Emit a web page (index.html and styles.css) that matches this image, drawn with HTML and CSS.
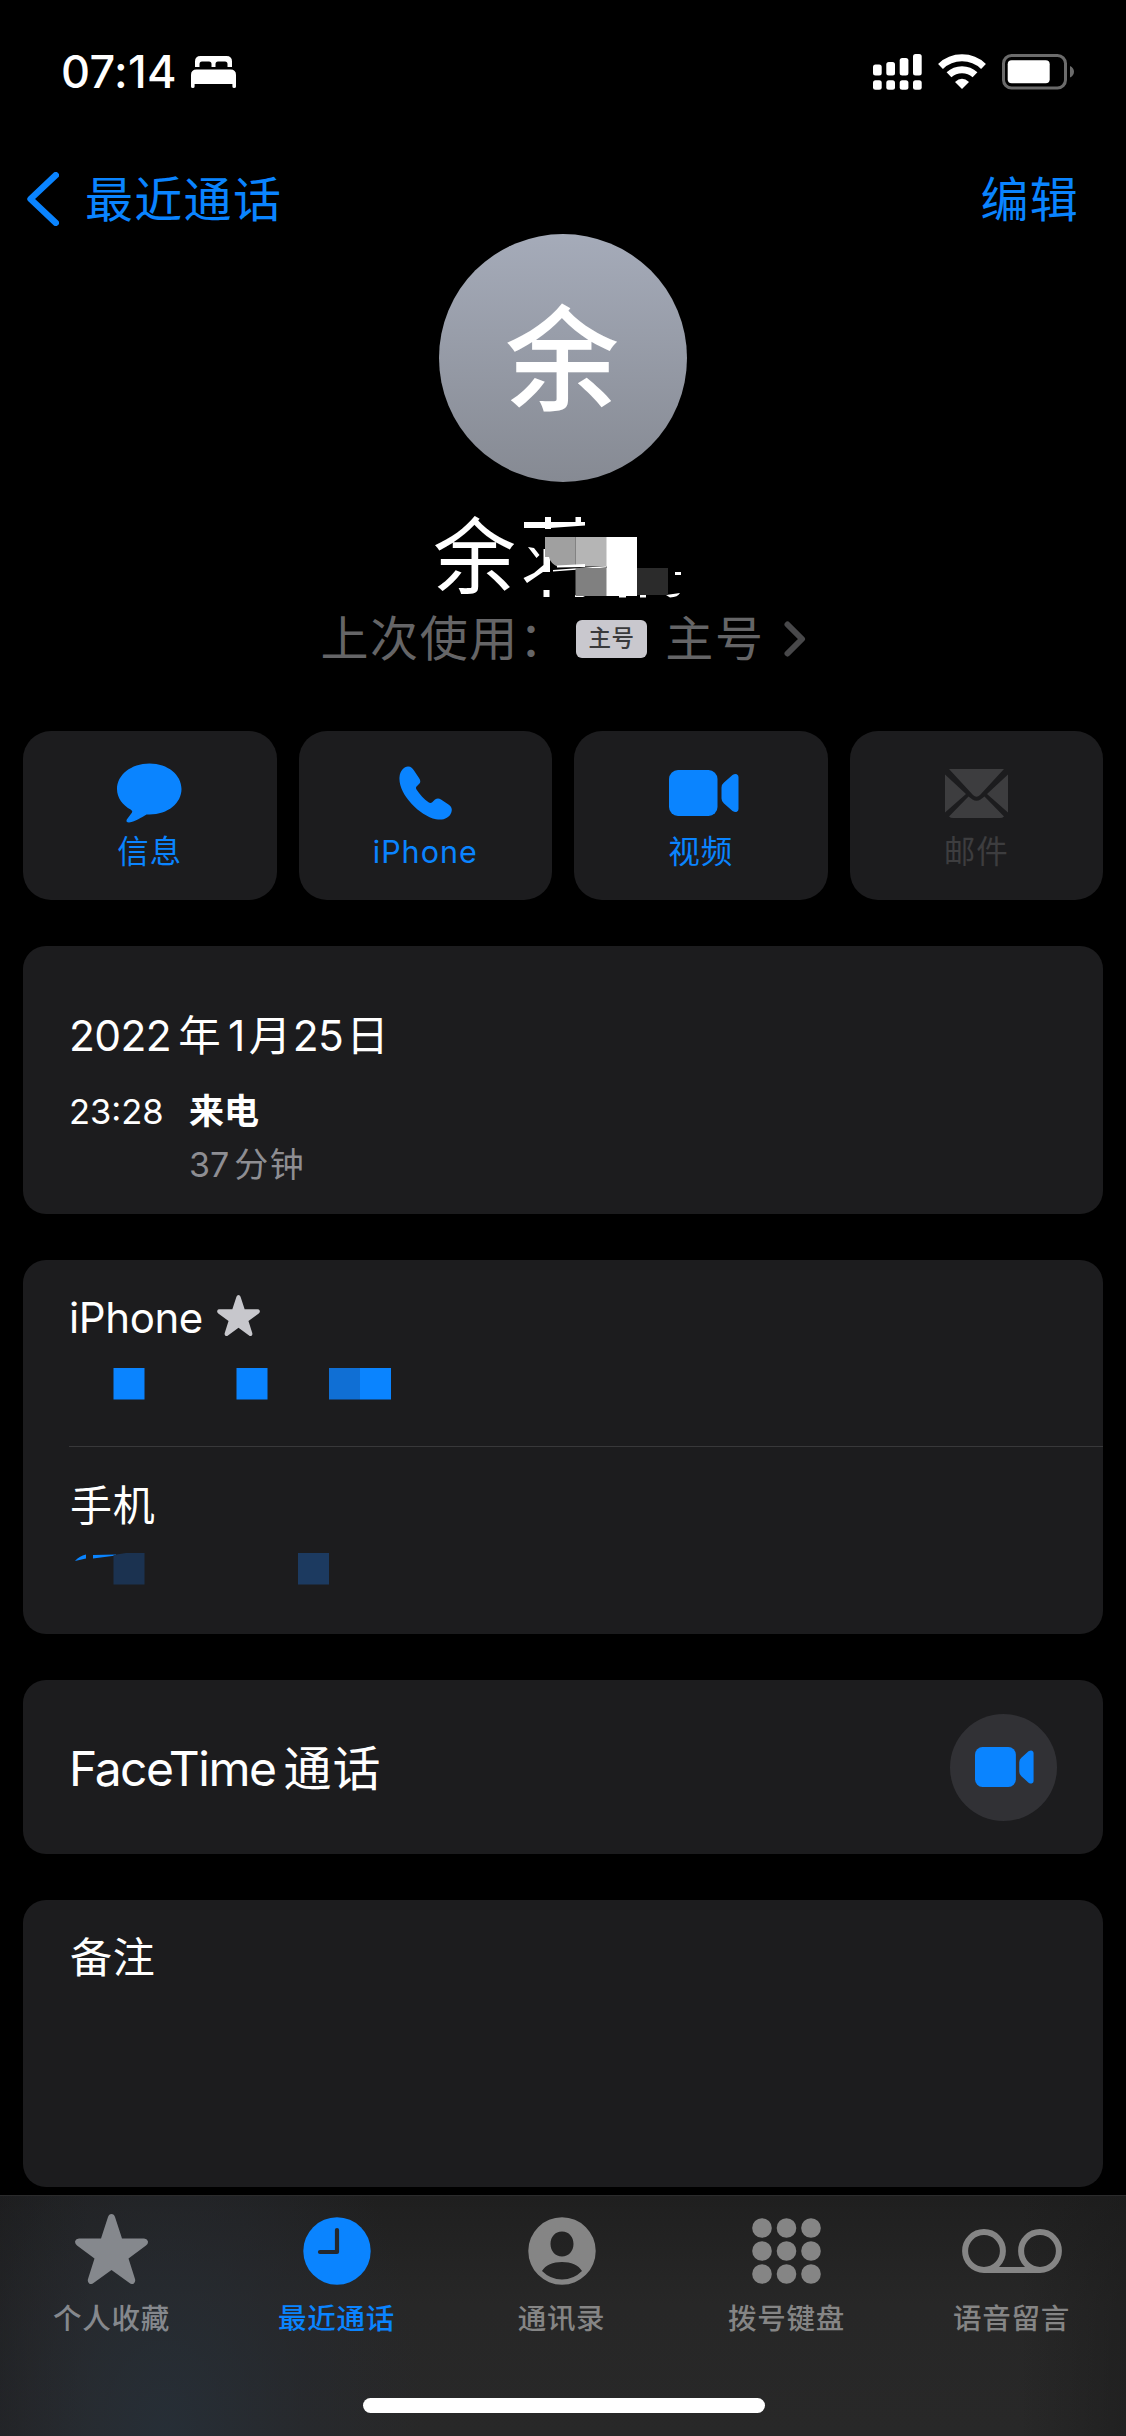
FILE: index.html
```html
<!DOCTYPE html>
<html lang="zh-CN">
<head>
<meta charset="utf-8">
<title>最近通话</title>
<link rel="stylesheet" href="styles.css">
</head>
<body>
<div class="screen">
  <header class="status">
    <div class="status-left">
      <span class="time">07:14</span>
      <svg width="45" height="32" viewBox="0 0 45 32" fill="#fff"><path d="M4 11V5.500Q4 0 9.500 0H35.500Q41 0 41 5.500V11H36.500V8Q36.500 5.500 34 5.500H27Q24.500 5.500 24.500 8V11H20.500V8Q20.500 5.500 18 5.500H11Q8.500 5.500 8.500 8V11ZM0 19Q0 13.500 5.500 13.500H39.500Q45 13.500 45 19V30.500Q45 32 43.200 32Q41.400 32 41.400 30.500V28H3.600V30.500Q3.600 32 1.800 32Q0 32 0 30.500Z"/></svg>
    </div>
    <div class="status-right">
      <svg width="49" height="36" viewBox="0 0 49 36" fill="#fff"><rect x="0" y="10.500" width="8.700" height="11" rx="2.500"/><rect x="13.300" y="8" width="8.700" height="13.500" rx="2.500"/><rect x="26.700" y="4" width="8.700" height="17.500" rx="2.500"/><rect x="40" y="0" width="8.700" height="21.500" rx="2.500"/><rect x="0" y="26.300" width="8.700" height="9.400" rx="2.500"/><rect x="13.300" y="26.300" width="8.700" height="9.400" rx="2.500"/><rect x="26.700" y="26.300" width="8.700" height="9.400" rx="2.500"/><rect x="40" y="26.300" width="8.700" height="9.400" rx="2.500"/></svg>
      <svg class="wifi" width="48" height="36" viewBox="0 0 48 36"><g fill="none" stroke="#fff" stroke-width="7"><path d="M2.500 12.500A31 31 0 0 1 45.500 12.500"/><path d="M11 20.800A19 19 0 0 1 37 20.800"/></g><path d="M24 35L17 28Q24 21.500 31 28Z" fill="#fff"/></svg>
      <svg width="72" height="36" viewBox="0 0 72 36"><rect x="1.500" y="1.500" width="62" height="32.500" rx="8" fill="none" stroke="#6b6b6b" stroke-width="3"/><rect x="5.700" y="6.300" width="42" height="23" rx="4" fill="#fff"/><path d="M68 12Q72 14 72 17.700T68 23.500Z" fill="#6b6b6b"/></svg>
    </div>
  </header>

  <nav class="nav">
    <a class="back"><svg width="32" height="54" viewBox="0 0 32 54"><path d="M28.800 3.200L3.500 27L28.800 50.800" fill="none" stroke="#0a84ff" stroke-width="6.400" stroke-linecap="round" stroke-linejoin="round"/></svg><span>最近通话</span></a>
    <a class="edit">编辑</a>
  </nav>

  <section class="profile">
    <div class="avatar">余</div>
    <div class="name">
      <span>余</span>
      <svg width="170" height="82" viewBox="522 516 170 82" fill="#fff">
        <path d="M524 522H585V525.500L550 528H524ZM545 517H551V529H545ZM575.500 517H581V526H575.500ZM528 547L534 548L539.500 555L536.500 558ZM543.500 549H550V572H543V572L527 583L523.500 578L534 573L543.500 565ZM543.500 590H549.500V597H543.500ZM553 570L606 566V567.500L553 571.500ZM575 595H587L583 597H575ZM619 595H626V597.500H619ZM640 595H646V597.500H640ZM675 572H681V575H675ZM666 595L680 593Q678 597 670 597.500Z"/>
        <path d="M545 537H575.500V567H558Q550 563 549 557H545Z" fill="#a0a0a0"/>
        <path d="M575.500 537H607V566.500H575.500Z" fill="#b5b5b5"/>
        <path d="M557 565.500L585 564V567L557 567.500Z"/>
        <path d="M575.500 568H607V596H575.500Z" fill="#808080"/>
        <path d="M606.500 537H637V596H606.500Z"/>
        <path d="M637 568H668V595H637Z" fill="#2b2b2b"/>
      </svg>
    </div>
    <div class="last-used"><span>上次使用：</span><span class="sim">主号</span><span>主号</span><svg width="22" height="36" viewBox="0 0 22 36"><path d="M3.500 3.500L18 18L3.500 32.500" fill="none" stroke="#48484a" stroke-width="6" stroke-linecap="round" stroke-linejoin="round"/></svg></div>
  </section>

  <section class="actions">
    <div class="action"><svg width="65" height="60" viewBox="0 0 65 60"><path fill="currentColor" d="M32.500 .5C51 .5 64.500 12 64.500 26S51 51.500 32.500 51.500H29.500C24 54.500 19 58.500 12 59.500Q8.500 59.500 9.800 56.500L15 49.500Q16 48.200 14 46.800C5.500 42 0 35 0 26C0 12 14 .5 32.500 .5Z"/></svg><span>信息</span></div>
    <div class="action"><svg width="53" height="54" viewBox="0 0 53 54"><path fill="currentColor" d="M0.500 11C1 4.500 5 .5 9 .4C12 .3 13.500 2 15 4.500L20 12Q22.300 15 20.500 17.500L17.500 20.500Q16.500 22 17.500 23.500C21 29 25 33 29.500 36.300Q31.500 37.600 33.200 36.200L36 33.500Q39 31.500 42 33.500L49.500 38.500C53 41 53.300 43.500 52.300 46.500C50 52.500 44 54.500 37 53.200C20 49.500 -1 27.500 .5 11Z"/></svg><span class="latin">iPhone</span></div>
    <div class="action"><svg class="video" width="70" height="46" viewBox="0 0 70 46" fill="currentColor"><rect width="48.500" height="46" rx="9"/><path d="M52.500 17.500Q52.500 14.500 55 12.500L63.500 5Q66 3.300 67.800 4.200T69.500 7V39Q69.500 41 67.800 41.800T63.500 41L55 33.500Q52.500 31.500 52.500 28.500Z"/></svg><span>视频</span></div>
    <div class="action disabled"><svg width="63" height="49" viewBox="0 0 63 49" fill="currentColor"><path d="M4 0H59L35 26Q31.500 29.500 28 26ZM0 5.500L21 25L0 43.500ZM63 5.500V43.500L42 25ZM23.500 27.500L27.500 30.500Q31.500 33 35.500 30.500L39.500 27.500L59 47.500Q57.500 49 55 49H8Q5.500 49 4 47.500Z"/></svg><span>邮件</span></div>
  </section>

  <section class="card history">
    <div class="date"><span>2022</span><span>年</span><span>1</span><span>月</span><span>25</span><span>日</span></div>
    <div class="call">
      <span class="call-time">23:28</span>
      <div><div class="call-type">来电</div><div class="duration">37<span>分钟</span></div></div>
    </div>
  </section>

  <section class="card phones">
    <div class="phone">
      <div class="label latin">iPhone<svg width="43" height="41" viewBox="0 0 73 70"><use href="#star"/></svg></div>
      <svg class="mask" width="330" height="32" viewBox="72 0 330 32"><path fill="#0a84ff" d="M113.500 0H144.500V31.500H113.500ZM236.500 0H267.500V31.500H236.500ZM360 0H391V31.500H360Z"/><path fill="#106fd4" d="M329 0H360V31.500H329Z"/></svg>
    </div>
    <div class="phone second">
      <div class="label">手机</div>
      <svg class="mask" width="330" height="32" viewBox="72 0 330 32"><path fill="#0a84ff" d="M75 8Q79 3 86 1.500V5.500ZM93 2L116 1.500V2.500L93 5.500Z"/><path fill="#1b3250" d="M113.500 2L126 0H144.500V31.500H113.500Z"/><path fill="#1c3a60" d="M298 0H329V31.500H298Z"/></svg>
    </div>
  </section>

  <section class="card facetime">
    <span class="ft-label">FaceTime<span>通话</span></span>
    <span class="ft-button"><svg width="59" height="40" viewBox="0 0 70 46" preserveAspectRatio="none" fill="#0a84ff"><rect width="48.500" height="46" rx="9"/><path d="M52.500 17.500Q52.500 14.500 55 12.500L63.500 5Q66 3.300 67.800 4.200T69.500 7V39Q69.500 41 67.800 41.800T63.500 41L55 33.500Q52.500 31.500 52.500 28.500Z"/></svg></span>
  </section>

  <section class="card notes">备注</section>

  <footer class="tabs">
    <div class="tab-row">
      <div class="tab cool"><svg width="73" height="70" viewBox="0 0 73 70"><path id="star" fill="currentColor" d="M36.500 0Q39 0 40 3L47 24.500H69Q72 24.500 72.800 27T71 31.500L53.500 44.500L60 65Q60.800 68 58.800 69.400T54.500 69L36.500 56L18.500 69Q16.200 70.800 14.200 69.400T13 65L19.500 44.500L2 31.500Q-.5 29.500 .2 27T4 24.500H26L33 3Q34 0 36.500 0Z"/></svg><span>个人收藏</span></div>
      <div class="tab active"><svg width="68" height="68" viewBox="0 0 68 68"><circle cx="34" cy="34" r="33.700" fill="#0a84ff"/><path d="M34 13V35H17" fill="none" stroke="#24282d" stroke-width="4.200" stroke-linecap="round" stroke-linejoin="round"/></svg><span>最近通话</span></div>
      <div class="tab"><svg width="68" height="68" viewBox="0 0 68 68"><path fill="currentColor" fill-rule="evenodd" d="M34 .3A33.700 33.700 0 1 1 34 67.700A33.700 33.700 0 1 1 34 .3ZM34 14.500C27 14.500 22.500 20 22.500 27S27.500 39.500 34 39.500S45.500 34 45.500 27S41 14.500 34 14.500ZM34 45C25 45 17.500 48 14 54Q22.500 62.500 34 62.500T54 54C50.500 48 43 45 34 45Z"/></svg><span>通讯录</span></div>
      <div class="tab"><svg width="69" height="66" viewBox="0 0 69 66" fill="currentColor"><circle cx="10" cy="10" r="9.800"/><circle cx="34.500" cy="10" r="9.800"/><circle cx="59" cy="10" r="9.800"/><circle cx="10" cy="33" r="9.800"/><circle cx="34.500" cy="33" r="9.800"/><circle cx="59" cy="33" r="9.800"/><circle cx="10" cy="56" r="9.800"/><circle cx="34.500" cy="56" r="9.800"/><circle cx="59" cy="56" r="9.800"/></svg><span>拨号键盘</span></div>
      <div class="tab"><svg width="100" height="44" viewBox="0 0 100 44" fill="none" stroke="currentColor" stroke-width="6"><circle cx="22" cy="22" r="18.900"/><circle cx="78" cy="22" r="18.900"/><path d="M22 40.900H78"/></svg><span>语音留言</span></div>
    </div>
    <div class="home"></div>
  </footer>
</div>
</body>
</html>
```
FILE: styles.css
```css
* { box-sizing: border-box; }
body { margin: 0; background: #000; }
svg { display: block; flex: none; }
.screen {
  width: 1126px; height: 2436px; overflow: hidden;
  display: flex; flex-direction: column;
  background: #000; color: #fff;
  font-family: Inter, "Noto Sans CJK SC", sans-serif;
  white-space: nowrap;
}
.status { height: 146px; padding: 0 52px 2px 61px; display: flex; align-items: center; justify-content: space-between; }
.status-left { display: flex; align-items: center; justify-content: space-between; width: 175px; }
.time { font-size: 45px; font-weight: 550; letter-spacing: 0.3px; line-height: 60px; }
.status-right { display: flex; gap: 16px; align-items: center; }

.nav { height: 106px; padding: 0 47px 0 27px; display: flex; justify-content: space-between; color: #0a84ff; font-size: 48px; letter-spacing: 1.3px; line-height: 106px; }
.back { display: flex; align-items: center; gap: 26px; }
.back span, .edit { padding-top: 1px; }

.profile { height: 479px; margin-top: -18px; display: flex; flex-direction: column; align-items: center; }
.avatar { width: 248px; height: 248px; border-radius: 50%; background: linear-gradient(#a5abb9, #868a93); font-size: 114px; font-weight: 500; line-height: 251px; text-align: center; padding-right: 2px; }
.name { height: 84px; margin-top: 33px; width: 258px; display: flex; align-items: center; gap: 6px; font-size: 83px; line-height: 84px; }
.name span { width: 82px; margin-left: -1px; margin-right: 1px; }
.last-used { width: 485px; height: 50px; margin-top: 15px; display: flex; align-items: center; color: #656567; font-size: 48px; letter-spacing: 1.6px; line-height: 50px; }
.sim { width: 72px; height: 38px; margin: 0 18px 0 7px; border-radius: 6px; background: #c9c8ce; color: #3a3a3c; font-size: 22.500px; letter-spacing: 0.4px; font-weight: 500; line-height: 36px; text-align: center; }
.last-used svg { margin-left: 19px; }

.actions { margin: 18px 23px 0; display: grid; grid-template-columns: repeat(4, 1fr); gap: 22px; }
.action { height: 169px; border-radius: 28px; background: #1c1c1e; color: #0a84ff; display: grid; grid-template-rows: 60px 40px; row-gap: 9px; align-content: start; justify-items: center; align-items: center; padding-top: 32px; font-size: 31.500px; letter-spacing: 1px; line-height: 40px; }
.action .video { margin-left: 6px; }
.action .latin { letter-spacing: 1px; font-size: 30.500px; }
.disabled { color: #3d3d3f; }

.card { margin: 46px 23px 0; border-radius: 23px; background: #1c1c1e; }
.history { height: 268px; padding: 60px 47px 0 46px; }
.date { display: flex; font-size: 42.500px; letter-spacing: -0.6px; line-height: 60px; }
.date span:nth-child(2) { margin: 0 8px 0 7px; }
.date span:nth-child(4) { margin: 0 2px 0 4px; }
.date span:nth-child(6) { margin-left: 3px; }
.call { display: flex; margin-top: 19px; line-height: 53px; }
.call-time { font-size: 34.500px; letter-spacing: 0px; width: 120px; }
.call-type { font-size: 35px; font-weight: 600; }
.duration { font-size: 34px; color: #8e8e93; }
.duration span { margin-left: 5px; letter-spacing: 1.500px; }

.phones { height: 374px; padding-left: 46px; }
.phone { height: 187px; padding: 28px 0 0 1px; border-bottom: 1px solid #38383a; }
.second { border: 0; padding-top: 29px; }
.label { display: flex; align-items: center; font-size: 42px; letter-spacing: 0.8px; line-height: 60px; }
.label.latin { letter-spacing: -0.4px; margin-left: -1px; }
.label svg { color: #c7c7cc; margin: -6px 0 0 14px; }
.mask { margin: 20px 0 0 2px; }
.second .mask { margin-top: 17px; }

.facetime { height: 174px; padding: 0 46px 0 46px; display: flex; align-items: center; justify-content: space-between; font-size: 48px; }
.ft-label { letter-spacing: -1.5px; padding-bottom: 5px; }
.ft-label span { margin-left: 8px; letter-spacing: 1px; }
.ft-button { width: 107px; height: 107px; border-radius: 50%; background: #313135; display: flex; align-items: center; justify-content: center; padding-left: 2px; }

.notes { height: 287px; padding: 28px 47px; font-size: 42px; letter-spacing: 0.8px; line-height: 60px; }

.tabs { height: 241px; margin-top: 8px; border-top: 1px solid #2b2b2c; background: radial-gradient(ellipse 260px 400px at 165px 240px, rgba(38, 48, 58, .8), rgba(38, 42, 49, .5) 55%, transparent), linear-gradient(90deg, rgba(24,24,25,.5), transparent 90px, transparent 1020px, rgba(26,26,26,.5)), linear-gradient(#1f1f1f, #272727 45%, #282828); }
.tab-row { display: grid; grid-template-columns: repeat(5, 225px); height: 202px; align-content: start; margin-left: -1px; }
.tab { display: grid; grid-template-rows: 109px 28px; justify-items: center; align-items: center; color: #858585; font-size: 28.500px; font-weight: 500; letter-spacing: 0.7px; line-height: 28px; }
.cool { color: #85888d; }
.cool svg { margin-top: -4px; }
.active { color: #0a84ff; }
.home { width: 402px; height: 15px; margin: 0 0 0 363px; border-radius: 8px; background: #fff; }
```
